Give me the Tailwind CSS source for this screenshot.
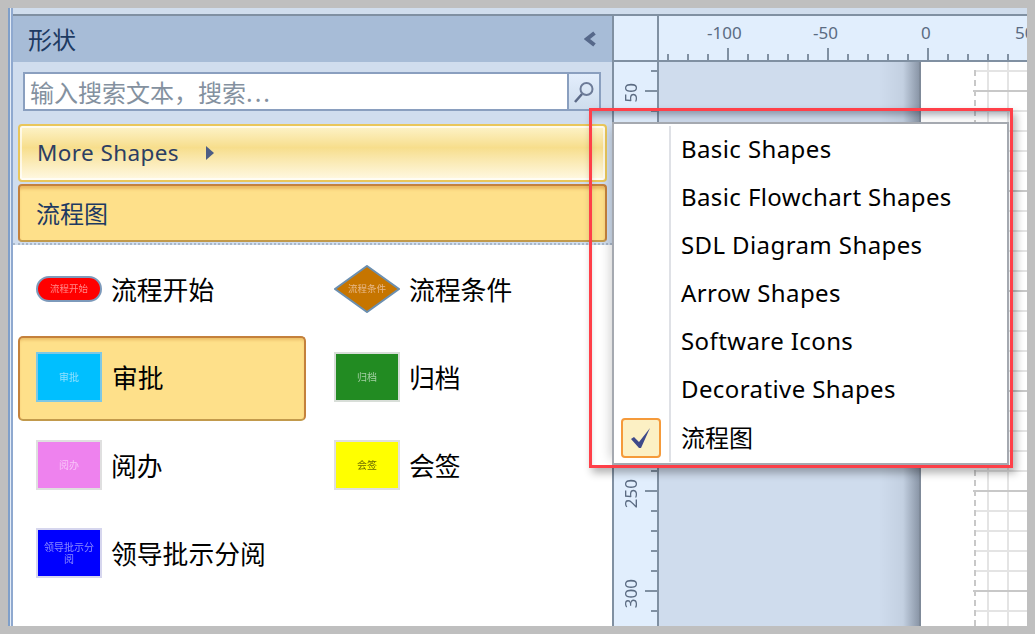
<!DOCTYPE html>
<html lang="zh">
<head>
<meta charset="utf-8">
<script src="https://cdn.jsdelivr.net/npm/@tailwindcss/browser@4"></script>
</head>
<body class="m-0 w-[1035px] h-[634px] overflow-hidden bg-[#bfbfbf] font-['Noto_Sans','Noto_Sans_CJK_SC',sans-serif]">
<div class="relative ml-2 mt-2 w-[1019px] h-[618px] flex">
  <div class="w-[2px] bg-[#7f9fc9]"></div>
  <div class="w-[1px] bg-[#e4ecf7]"></div>
  <div class="w-[2px] bg-[#8fa9cf]"></div>
  <div class="flex-1 flex flex-col min-w-0">
    <div class="h-[6px] bg-[#d0dded]"></div>
    <div class="h-[2px] bg-[#8090a2]"></div>
    <div class="flex-1 flex min-h-0">
      <!-- shapes panel -->
      <div class="w-[599px] flex flex-col">
        <div class="h-[46px] bg-[#a7bcd7] flex items-center justify-between pl-[15px] pr-[16px]">
          <span class="text-[24px] leading-none text-[#1d3a62] font-['Noto_Sans_CJK_SC',sans-serif]">形状</span>
          <svg width="12" height="16" viewBox="0 0 12 16"><path d="M10.5 2 L3 8 L10.5 14" fill="none" stroke="#56688a" stroke-width="4"/></svg>
        </div>
        <div class="h-[180px] bg-[#d0ddee] pt-[10px] pl-[5px] pr-[6px] flex flex-col">
          <div class="ml-[5px] w-[578px] h-[39px] flex border-2 border-[#8a9fbf] bg-white">
            <div class="flex-1 flex items-center pl-[5px] text-[24px] leading-none text-[#84919f] font-['Noto_Sans_CJK_SC',sans-serif]"><span>输入搜索文本，搜索<span class="tracking-[2px]">...</span></span></div>
            <div class="w-[32px] border-l-2 border-[#8a9fbf] bg-gradient-to-b from-[#e3eefc] to-[#cfdded] flex items-center justify-center">
              <svg width="26" height="26" viewBox="0 0 26 26"><circle cx="15.5" cy="10" r="6" fill="none" stroke="#6d7b98" stroke-width="2"/><path d="M11 15 L4 23" stroke="#5c6a88" stroke-width="2.5"/></svg>
            </div>
          </div>
          <div class="mt-[13px] w-[589px] h-[58px] rounded-[4px] border-2 border-[#e9c65a] bg-gradient-to-b from-[#fdf3c9] via-[#f7de8c] via-40% to-[#fff9e4] shadow-[inset_0_0_0_2px_rgba(255,255,255,0.65)] flex items-center pl-[17px] text-[22.5px] text-[#2c3e63] tracking-[0.4px]">
            <span>More Shapes</span>
            <svg class="ml-[26px]" width="10" height="14" viewBox="0 0 10 14"><path d="M1 0 L9 7 L1 14 Z" fill="#4d5d85"/></svg>
          </div>
          <div class="mt-[2px] w-[589px] h-[58px] rounded-[4px] border-2 border-[#c4813c] border-b-[#c29a4c] bg-[#fee08a] shadow-[inset_0_4px_3px_-1px_rgba(210,140,50,0.45)] flex items-center pl-[16px] text-[24px] text-[#1d3a62] font-['Noto_Sans_CJK_SC',sans-serif]">流程图</div>
        </div>
        <div class="h-[3px] bg-[#d0ddee] border-b-2 border-dotted border-[#a9b7c8]"></div>
        <div class="flex-1 bg-white pl-[5px] pt-[3px] grid grid-cols-[288px_288px] auto-rows-[85px] gap-x-[10px] gap-y-[3px] text-[25.8px] text-black font-['Noto_Sans_CJK_SC',sans-serif]">
          <div class="flex items-center pl-[16px] pb-[3px] border-2 border-transparent">
            <div class="w-[66px] h-[26px] rounded-full border-2 border-[#7d9abb] bg-[#ff0000] flex items-center justify-center text-[9.5px] leading-none text-[#ff8a8a]"><span class="blur-[0.6px]">流程开始</span></div>
            <span class="ml-[9px] leading-none">流程开始</span>
          </div>
          <div class="flex items-center pl-[16px] pb-[3px] border-2 border-transparent">
            <div class="relative w-[66px] h-[48px] flex items-center justify-center text-[9.5px] leading-none text-[#e8b98a]">
              <svg class="absolute inset-0" width="66" height="48" viewBox="0 0 66 48"><path d="M33 1 L65 24 L33 47 L1 24 Z" fill="#c67500" stroke="#6b8fb0" stroke-width="2"/></svg>
              <span class="relative blur-[0.6px]">流程条件</span>
            </div>
            <span class="ml-[9px] leading-none">流程条件</span>
          </div>
          <div class="flex items-center pl-[16px] pb-[3px] rounded-[5px] border-2 border-[#c4813c] border-b-[#c29a4c] bg-[#fee08a] shadow-[inset_0_3px_3px_-1px_rgba(210,140,50,0.4)]">
            <div class="w-[66px] h-[50px] border-2 border-[#7cc8e6] bg-[#00bfff] flex items-center justify-center text-[10px] leading-none text-[#8fe0ff]"><span class="blur-[0.6px]">审批</span></div>
            <span class="ml-[10px] leading-none">审批</span>
          </div>
          <div class="flex items-center pl-[16px] pb-[3px] border-2 border-transparent">
            <div class="w-[66px] h-[50px] border-2 border-[#d8ded8] bg-[#228b22] flex items-center justify-center text-[10px] leading-none text-[#a4d0a4]"><span class="blur-[0.6px]">归档</span></div>
            <span class="ml-[9px] leading-none">归档</span>
          </div>
          <div class="flex items-center pl-[16px] pb-[3px] border-2 border-transparent">
            <div class="w-[66px] h-[50px] border-2 border-[#dfdfdf] bg-[#ee82ee] flex items-center justify-center text-[10px] leading-none text-[#f8c4f8]"><span class="blur-[0.6px]">阅办</span></div>
            <span class="ml-[9px] leading-none">阅办</span>
          </div>
          <div class="flex items-center pl-[16px] pb-[3px] border-2 border-transparent">
            <div class="w-[66px] h-[50px] border-2 border-[#dfdfdf] bg-[#ffff00] flex items-center justify-center text-[10px] leading-none text-[#6b6b00]"><span class="blur-[0.6px]">会签</span></div>
            <span class="ml-[9px] leading-none">会签</span>
          </div>
          <div class="flex items-center pl-[16px] pb-[3px] border-2 border-transparent">
            <div class="w-[66px] h-[50px] border-2 border-[#d6d6ee] bg-[#0000ff] flex flex-col items-center justify-center text-[10px] leading-[12px] text-[#8c8cff]"><span class="blur-[0.6px]">领导批示分</span><span class="blur-[0.6px]">阅</span></div>
            <span class="ml-[9px] leading-none">领导批示分阅</span>
          </div>
        </div>
      </div>
      <div class="w-[2px] bg-[#8090a2]"></div>
      <!-- rulers and canvas -->
      <div class="flex-1 flex flex-col min-w-0">
        <div class="h-[44px] flex bg-[#e1eefd]">
          <div class="w-[43px]"></div>
          <div class="w-[2px] bg-[#8090a2]"></div>
          <div class="relative flex-1 overflow-hidden text-[17px] leading-none text-[#5b6b82]">
            <svg class="absolute inset-0" width="368" height="44" stroke="#8090a2" stroke-width="2">
              <path d="M9 38V44M29 38V44M49 38V44M89 38V44M109 38V44M129 38V44M149 38V44M189 38V44M209 38V44M229 38V44M249 38V44M289 38V44M309 38V44M329 38V44M349 38V44"/>
              <path d="M69 32V44M169 32V44M269 32V44M369 32V44"/>
            </svg>
            <span class="absolute left-[48px] top-[8px]">-100</span>
            <span class="absolute left-[154px] top-[8px]">-50</span>
            <span class="absolute left-[262px] top-[8px]">0</span>
            <span class="absolute left-[356px] top-[8px]">50</span>
          </div>
        </div>
        <div class="h-[2px] bg-[#8090a2]"></div>
        <div class="flex-1 flex min-h-0">
          <div class="relative w-[43px] bg-[#e1eefd] text-[17px] leading-none text-[#5b6b82]">
            <svg class="absolute inset-0" width="43" height="564" stroke="#8090a2" stroke-width="2">
              <path d="M37 9H43M37 49H43M37 69H43M37 89H43M37 109H43M37 149H43M37 169H43M37 189H43M37 209H43M37 249H43M37 269H43M37 289H43M37 309H43M37 349H43M37 369H43M37 389H43M37 409H43M37 449H43M37 469H43M37 489H43M37 509H43M37 549H43"/>
              <path d="M31 29H43M31 129H43M31 229H43M31 329H43M31 429H43M31 529H43"/>
            </svg>
            <span class="absolute left-[8px] top-[21px] [writing-mode:vertical-rl] rotate-180">50</span>
            <span class="absolute left-[8px] top-[417px] [writing-mode:vertical-rl] rotate-180">250</span>
            <span class="absolute left-[8px] top-[517px] [writing-mode:vertical-rl] rotate-180">300</span>
          </div>
          <div class="w-[2px] bg-[#8090a2]"></div>
          <div class="w-[260px] bg-[#cfdced] flex justify-end">
            <div class="w-[40px] bg-gradient-to-r from-[#cfdced] via-[#c3d0e1] via-60% to-[#8b97a8]"></div>
          </div>
          <div class="w-[2px] bg-[#7f8a99]"></div>
          <div class="flex-1 bg-white overflow-hidden">
            <svg width="106" height="564" fill="none">
              <path d="M54 9H106M54 49H106M54 69H106M54 89H106M54 109H106M54 149H106M54 169H106M54 189H106M54 209H106M54 249H106M54 269H106M54 289H106M54 309H106M54 349H106M54 369H106M54 389H106M54 409H106M54 449H106M54 469H106M54 489H106M54 509H106M54 549H106" stroke="#e4e4e4" stroke-width="2"/>
              <path d="M67 0V564M87 0V564" stroke="#e4e4e4" stroke-width="2"/>
              <path d="M52 29H106M52 129H106M52 229H106M52 329H106M52 429H106M52 529H106" stroke="#c8c8c8" stroke-width="2"/>
              <path d="M54 8V564" stroke="#c8c8c8" stroke-width="2" stroke-dasharray="6 4"/>
            </svg>
          </div>
        </div>
      </div>
    </div>
  </div>
  <!-- red highlight with the menu inside -->
  <div class="absolute left-[581px] top-[100px] w-[424px] h-[360px] border-[3px] border-[#ff4049] shadow-[3px_5px_8px_rgba(0,0,0,0.3)]">
    <div class="absolute inset-0 shadow-[inset_0_7px_7px_-3px_rgba(40,50,70,0.4)]"></div>
    <div class="absolute left-[20px] top-[11px] w-[397px] h-[343px] bg-white border-2 border-[#a5a9b0] shadow-[-8px_0_10px_-6px_rgba(0,0,0,0.18)] flex text-[24px] leading-none text-black tracking-[0.4px]">
      <div class="w-[57px] mt-[2px] mb-[1px] border-r-2 border-[#dfe1e6] flex flex-col justify-end">
        <div class="ml-[7px] mb-[4px] w-[40px] h-[40px] rounded-[4px] border-2 border-[#f59a3a] bg-[#fcf0c4]">
          <svg width="36" height="36" viewBox="0 0 36 36"><path d="M8 19 L11 17 L16 22 L27 8 L18 28 L16 28 Z" fill="#3f4a8a"/></svg>
        </div>
      </div>
      <div class="flex-1 pl-[10px] pt-[1px] flex flex-col">
        <div class="h-[48px] flex items-center">Basic Shapes</div>
        <div class="h-[48px] flex items-center">Basic Flowchart Shapes</div>
        <div class="h-[48px] flex items-center">SDL Diagram Shapes</div>
        <div class="h-[48px] flex items-center">Arrow Shapes</div>
        <div class="h-[48px] flex items-center">Software Icons</div>
        <div class="h-[48px] flex items-center">Decorative Shapes</div>
        <div class="h-[48px] flex items-center font-['Noto_Sans_CJK_SC',sans-serif] tracking-normal">流程图</div>
      </div>
    </div>
  </div>
</div>
</body>
</html>
